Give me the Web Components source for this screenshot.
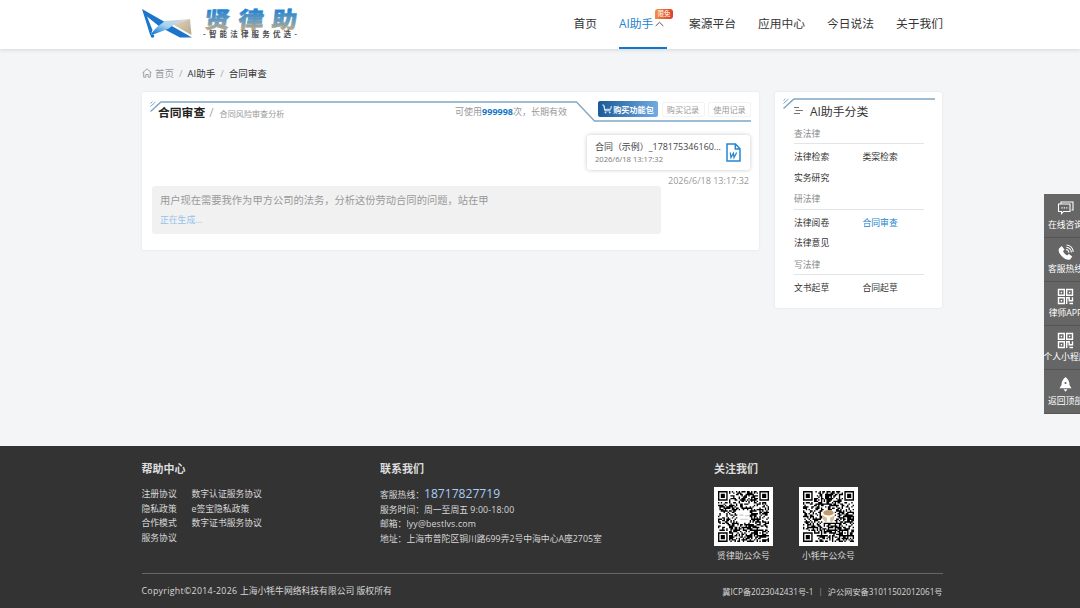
<!DOCTYPE html>
<html lang="zh-CN">
<head>
<meta charset="UTF-8">
<title>合同审查 - 贤律助</title>
<style>
body{
    margin:0;
    height:608px;
    overflow:hidden;
    background:#f4f5f7;
    color:#333;
    font-family:"Open Sans","Noto Sans CJK SC",sans-serif;
    font-size:8.8px;
}
</style>
</head>
<body>
<law-page>
    <law-header slot="header">
        <nav-item>首页</nav-item>
        <nav-item active badge="限免">AI助手</nav-item>
        <nav-item>案源平台</nav-item>
        <nav-item>应用中心</nav-item>
        <nav-item>今日说法</nav-item>
        <nav-item>关于我们</nav-item>
    </law-header>
    <bread-crumb slot="crumb"></bread-crumb>
    <review-panel slot="main">
        <file-card name="合同（示例）_178175346160..." time="2026/6/18 13:17:32"></file-card>
        <chat-reply status="正在生成...">用户现在需要我作为甲方公司的法务，分析这份劳动合同的问题，站在甲</chat-reply>
    </review-panel>
    <side-menu slot="aside">
        <menu-group label="查法律"><span>法律检索</span><span>类案检索</span><span>实务研究</span></menu-group>
        <menu-group label="研法律"><span>法律阅卷</span><span class="on">合同审查</span><span>法律意见</span></menu-group>
        <menu-group label="写法律"><span>文书起草</span><span>合同起草</span></menu-group>
    </side-menu>
    <law-footer slot="footer"></law-footer>
</law-page>
<float-bar></float-bar>

<script>
function define(name, html, setup){
    const template = document.createElement('template');
    template.innerHTML = html;
    window.customElements.define(name, class extends HTMLElement{
        constructor(){
            super();
            this.attachShadow({mode:'open'});
            this.shadowRoot.appendChild(template.content.cloneNode(true));
        }
        connectedCallback(){
            if(setup) setup(this, this.shadowRoot);
        }
    });
}

define('law-page', `
<style>
:host{display:flex;flex-direction:column;height:608px}
.body{flex:1;width:800px;margin:0 auto;position:relative;left:2px}
.cols{display:flex;justify-content:space-between;align-items:flex-start}
</style>
<slot name="header"></slot>
<div class="body">
    <slot name="crumb"></slot>
    <div class="cols"><slot name="main"></slot><slot name="aside"></slot></div>
</div>
<slot name="footer"></slot>
`);

define('law-logo', `
<style>
:host{display:block;width:160px;height:34px}
svg{display:block;overflow:visible}
.name{font:900 22.5px "Noto Sans CJK SC",sans-serif}
.sub{font:700 7.5px "Noto Sans CJK SC",sans-serif;fill:#4a4d52}
</style>
<svg width="160" height="34" viewBox="141 7 160 34">
    <defs>
        <linearGradient id="word" x1="0" y1="0" x2="0" y2="1">
            <stop offset=".2" stop-color="#1f80d4"/><stop offset=".58" stop-color="#6b9cb9"/><stop offset=".85" stop-color="#c0aa88"/>
        </linearGradient>
        <linearGradient id="band" x1="0" y1="1" x2="1" y2="0">
            <stop offset=".1" stop-color="#1b7fd6"/><stop offset=".5" stop-color="#a9d4f3"/><stop offset="1" stop-color="#ddd9cf"/>
        </linearGradient>
        <linearGradient id="tan" x1="0" y1="0" x2="1" y2="1">
            <stop offset="0" stop-color="#e3d8c6"/><stop offset="1" stop-color="#b9a789"/>
        </linearGradient>
    </defs>
    <path d="M142 9 192 37.500H180L160 27 147 16.500 152.500 30 150.500 36Z" fill="#1b75cb"/>
    <path d="M150 35 157 27 165 21 190 19 174 24.500 168 29 153 34.500Z" fill="url(#band)"/>
    <path d="M190 19 191.500 35 173 24.500Z" fill="url(#tan)"/>
    <circle cx="152.500" cy="36" r="1.800" fill="#1b75cb"/>
    <text class="name" x="0" y="0" textLength="82" transform="translate(203.800 28.300) skewX(-6) scale(1.130 1)" fill="url(#word)" stroke="url(#word)" stroke-width=".5">贤律助</text>
    <text class="sub" x="203" y="37.400" textLength="94">-智能法律服务优选-</text>
</svg>
`);

define('law-header', `
<style>
:host{
    display:block;
    flex:none;
    height:49px;
    background:#fff;
    box-shadow:0 1px 4px rgba(0,0,0,.13);
    position:relative;
}
.inner{width:802px;height:49px;margin:0 auto;display:flex;justify-content:space-between;position:relative;left:2px}
law-logo{margin-top:7px}
nav{display:flex;gap:22px}
</style>
<div class="inner"><law-logo></law-logo><nav><slot></slot></nav></div>
`);

define('nav-item', `
<style>
:host{display:block;height:49px;box-sizing:border-box;font-size:11.75px;line-height:47px;white-space:nowrap;position:relative}
:host([active]){color:#2483cf;border-bottom:2px solid #1277c9;width:48px}
svg,.badge{display:none}
:host([active]) svg{display:inline-block;margin-left:2px;vertical-align:1.500px}
:host([active]) .badge{
    display:block;
    position:absolute;
    left:36px;
    top:8.500px;
    width:18px;
    height:10px;
    border-radius:3px 3px 3px 0;
    background:linear-gradient(100deg,#ef9340,#dc3a28);
    color:#fff;
    font-size:6.500px;
    line-height:9.500px;
    text-align:center;
}
</style>
<slot></slot><svg width="9" height="6" viewBox="0 0 9 6" fill="none" stroke="#555"><path d="M.7 5 4.500 1.300 8.300 5"/></svg><span class="badge"></span>
`, (el, root) => {
    root.querySelector('.badge').textContent = el.getAttribute('badge') || '';
});

define('bread-crumb', `
<style>
:host{display:flex;align-items:center;height:17px;padding:15.500px 0 10.500px;font-size:9.500px;white-space:nowrap}
svg{margin-right:3px}
.home{color:#999}
i{font-style:normal;color:#aaa;margin:0 5px}
</style>
<svg width="10" height="10" viewBox="0 0 10 10" fill="none" stroke="#999" stroke-width=".9"><path d="M.6 4.800 5 .8l4.400 4M1.700 4v5.200h2.100V6.500h2.400v2.700h2.100V4"/></svg>
<span class="home">首页</span><i>/</i><span>AI助手</span><i>/</i><span>合同审查</span>
`);

define('review-panel', `
<style>
:host{display:block;box-sizing:border-box;width:617px;height:158px;background:#fff;border-radius:2px;box-shadow:0 0 3px rgba(0,0,0,.08);padding:8px 8px 0 8px;position:relative}
.frame{position:absolute;left:8px;top:8px}
.top{display:flex;height:32px;position:relative}
h1{margin:0 0 0 8px;font-size:11.800px;line-height:25px;font-weight:700;color:#222}
i{font-style:normal;font-size:12px;line-height:25px;color:#aaa;margin:0 6px 0 4px}
.desc{font-size:8.100px;line-height:27px;color:#999}
.quota{margin-left:auto;margin-right:31px;font-size:9px;line-height:24px;color:#999}
b{color:#1277c9}
.btns{display:flex;gap:3.500px;padding:1.500px 0 0}
.btns span{box-sizing:border-box;height:15px;line-height:13px;border:1px solid #f3f3f3;border-radius:2px;font-size:8.100px;color:#999;width:43px;text-align:center}
.btns .buy{display:flex;align-items:center;justify-content:center;gap:1px;width:60px;height:16px;margin-top:-.5px;border:0;background:linear-gradient(100deg,#175896,#74ade4);color:#fff;font-weight:600}
</style>
<svg class="frame" width="602" height="22" fill="none" stroke="#7fa6c6">
    <path d="M.5 11.500 11 2h415.500l18 19H601" stroke-width="1.300"/>
    <path d="M.5 6.500 5.500 2M.5 3.500 2.500 1.700M5 7.500 10 2.500" stroke-width="1"/>
</svg>
<div class="top">
    <h1>合同审查</h1><i>/</i><span class="desc">合同风险审查分析</span>
    <span class="quota">可使用<b>999998</b>次，长期有效</span>
    <div class="btns">
        <span class="buy"><svg width="10" height="10" viewBox="0 0 10 10" fill="none" stroke="#fff" stroke-width=".9"><path d="M.3 1h1.500l1 5.800h5.500M2.300 3.500V2.200M3 5.300h5.700L9.400 2"/><circle cx="3.500" cy="8.600" r=".5"/><circle cx="7.800" cy="8.600" r=".5"/></svg>购买功能包</span>
        <span>购买记录</span><span>使用记录</span>
    </div>
</div>
<slot></slot>
`);

define('file-card', `
<style>
:host{display:flex;flex-direction:column;align-items:flex-end;margin-right:1px}
.card{box-sizing:border-box;width:163px;height:35px;margin-top:2.500px;padding:4px 9px 0 8px;display:flex;justify-content:space-between;border-radius:3px;background:#fff;box-shadow:0 0 4px rgba(0,0,0,.22)}
.name{font-size:8.950px;line-height:15px;color:#444;white-space:nowrap}
.time{font-size:7.600px;line-height:11px;color:#777}
.sent{font-size:9.050px;line-height:13px;margin-top:4px;margin-right:1px;color:#999}
svg{margin-top:4px}
</style>
<div class="card">
    <div><div class="name"></div><div class="time"></div></div>
    <svg width="15" height="19" viewBox="0 0 15 19" fill="none" stroke="#2785d2" stroke-width="1.500"><path d="M1 1h8.500L14 5.800V18H1ZM9.300 1v5H14"/><path d="m4.300 9.500.7 5 2.400-4.300.6 4.300 2.700-5" stroke-width="1.300"/></svg>
</div>
<div class="sent"></div>
`, (el, root) => {
    root.querySelector('.name').textContent = el.getAttribute('name');
    root.querySelector('.time').textContent = el.getAttribute('time');
    root.querySelector('.sent').textContent = el.getAttribute('time');
});

define('chat-reply', `
<style>
:host{display:block;box-sizing:border-box;width:509px;height:48px;margin:-1px 0 0 2px;padding:6px 8px;background:#f1f1f1;border-radius:3px;font-size:10.270px;line-height:17px;color:#999;white-space:nowrap}
.status{font-size:8.800px;line-height:14px;margin-top:4px;color:#92c4ec}
</style>
<slot></slot>
<div class="status"></div>
`, (el, root) => {
    root.querySelector('.status').textContent = el.getAttribute('status');
});

define('side-menu', `
<style>
:host{display:block;box-sizing:border-box;width:167px;height:216px;padding:8px 18px 0 19px;background:#fff;border-radius:2px;box-shadow:0 0 3px rgba(0,0,0,.08);position:relative}
.frame{position:absolute;left:8px;top:5px}
h2{display:flex;align-items:center;gap:7px;margin:0;height:20.500px;font-size:11.900px;font-weight:400;color:#333}
</style>
<svg class="frame" width="153" height="13" fill="none" stroke="#7fa6c6">
    <path d="M.5 11.500 11 2H152" stroke-width="1.400"/>
    <path d="M.5 6.500 5.500 2M.5 3.500 2.500 1.700M5 7.500 10 2.500"/>
</svg>
<h2><svg width="9" height="9" fill="none" stroke="#777"><path d="M0 1.500h5M1.500 4.500H9M0 7.500h6"/></svg>AI助手分类</h2>
<slot></slot>
`);

define('menu-group', `
<style>
:host{display:block;padding-top:6px;margin-bottom:-2px}
.label{height:16.500px;line-height:15px;font-size:8.800px;color:#888;border-bottom:1px solid #e1e5e8}
.items{display:grid;grid-template-columns:68.500px 1fr;grid-auto-rows:20.600px;line-height:20px;padding-top:3px;color:#333}
::slotted(.on){color:#2483cf}
</style>
<div class="label"></div>
<div class="items"><slot></slot></div>
`, (el, root) => {
    root.querySelector('.label').textContent = el.getAttribute('label');
});

// decorative code: finder and alignment marks plus a seeded fill
function qrPath(seed){
    const n = 37;
    let d = '';
    const ring = (x, y, cx, cy) => Math.max(Math.abs(x - cx), Math.abs(y - cy));
    for(let y = 0; y < n; y++){
        for(let x = 0; x < n; x++){
            seed = (seed * 1103515245 + 12345) % 2147483648;
            let on = (seed >> 16) % 100 < 52;
            for(const [cx, cy] of [[3, 3], [33, 3], [3, 33]]){
                const r = ring(x, y, cx, cy);
                if(r <= 4) on = r < 2 || r === 3;
            }
            const a = ring(x, y, 30, 30);
            if(a <= 2) on = a !== 1;
            if(ring(x, y, 18, 18) < 5) on = false;
            if(on) d += 'M' + x + ' ' + y + 'h1v1h-1z';
        }
    }
    return d;
}

define('qr-code', `
<style>
:host{display:block;width:59px;text-align:center}
.box{display:block;width:59px;height:59px;background:#fff}
.text{line-height:14px;margin-top:3px;white-space:nowrap}
</style>
<svg class="box" viewBox="-2.900 -2.900 42.800 42.800">
    <path class="mods" fill="#000"/>
    <g class="mark"></g>
</svg>
<div class="text"><slot></slot></div>
`, (el, root) => {
    root.querySelector('.mods').setAttribute('d', qrPath(Number(el.getAttribute('seed'))));
    root.querySelector('.mark').innerHTML = el.hasAttribute('ox')
        ? '<ellipse cx="18.500" cy="15.800" rx="3.800" ry="2" fill="#c39b6b"/><path d="M14 17.500q0 4 3 5.500l.5-3.500zM23 17.500q0 4-3 5.500l-.5-3.500z" fill="#d9bd95"/>'
        : '<path d="M15.500 17.500h3M19.500 18h3M16 20.500h6" stroke="#ccc" stroke-width=".8"/>';
});

define('law-footer', `
<style>
:host{display:block;flex:none;box-sizing:border-box;height:162px;background:#333;color:#d8d8d8}
.wrap{width:801px;margin:0 auto;position:relative;left:2px}
.cols{display:grid;grid-template-columns:238.500px 334px 1fr;height:127.500px;box-sizing:border-box;padding-top:14px;border-bottom:1px solid #666}
h3{margin:0;font-size:11px;line-height:17px;font-weight:700;color:#ddd}
.links{display:grid;grid-template-columns:50px 1fr;grid-auto-rows:14.700px;line-height:14.700px;margin-top:10px}
.contact div{height:14.700px;line-height:14.700px;white-space:nowrap}
.contact{margin-top:11px}
.tel{font-size:12.100px;line-height:1;color:#a9cdf5}
.codes{display:flex;gap:26px;margin-top:9.500px}
.bottom{display:flex;justify-content:space-between;line-height:35px;white-space:nowrap}
.lat{letter-spacing:.3px}
.icp{font-size:8.200px;word-spacing:1px}
</style>
<div class="wrap">
    <div class="cols">
        <div>
            <h3>帮助中心</h3>
            <div class="links">
                <span>注册协议</span><span>数字认证服务协议</span>
                <span>隐私政策</span><span>e签宝隐私政策</span>
                <span>合作模式</span><span>数字证书服务协议</span>
                <span>服务协议</span>
            </div>
        </div>
        <div>
            <h3>联系我们</h3>
            <div class="contact">
                <div>客服热线：<span class="tel">18717827719</span></div>
                <div>服务时间：周一至周五 <span style="letter-spacing:.15px">9:00-18:00</span></div>
                <div>邮箱：<span style="letter-spacing:.15px">lyy@bestlvs.com</span></div>
                <div>地址：上海市普陀区铜川路699弄2号中海中心A座2705室</div>
            </div>
        </div>
        <div>
            <h3>关注我们</h3>
            <div class="codes"><qr-code seed="71">贤律助公众号</qr-code><qr-code seed="2026" ox>小牦牛公众号</qr-code></div>
        </div>
    </div>
    <div class="bottom"><span><span class="lat">Copyright©2014-2026 </span>上海小牦牛网络科技有限公司 版权所有</span><span class="icp">冀ICP备2023042431号-1 ｜ 沪公网安备31011502012061号</span></div>
</div>
`);

define('float-item', `
<style>
:host{display:flex;flex-direction:column;align-items:center;box-sizing:border-box;height:44px;padding-top:6px;border-bottom:1px solid #555;white-space:nowrap}
.label{line-height:14px;margin-top:1px}
</style>
<svg width="17" height="17" viewBox="0 0 17 17" fill="none" stroke="#fff" stroke-width="1.100"></svg>
<div class="label"><slot></slot></div>
`, (el, root) => {
    const icons = {
        chat:'<path d="M4 3.500V2h12v8h-1.500M1.500 4H13v7.500H6.500L4.500 13.700V11.500h-3z"/><path d="M4.500 7.800h1.200M6.800 7.800H8M9.200 7.800h1.200" stroke-width="1.300"/>',
        phone:'<path d="M2 4.500 4.700 2l2.800 3.500L6 7.300q1.500 3 4.200 4.200l1.600-1.400 3.500 2.500-2.200 2.800Q9.500 17 5 12.500T2 4.500z" fill="#fff" stroke="none"/><path d="M9 5.500q2.500.3 3 3.200M9.300 3.200q4.500.5 5.200 5.200M9.500 1q6 .5 6.800 7"/>',
        code:'<path d="M1.500 1.500h5.800v5.800H1.500zM9.700 1.500h5.800v5.800H9.700zM1.500 9.700h5.800v5.800H1.500zM9.700 16V9.700h2.500v3h3.300V9.200M12.500 15.500h3.500M4.400 3.700v1.500M12.600 3.700v1.500M4.400 11.900v1.500" stroke-width="1.400"/>',
        rocket:'<path d="M8.500 1Q12.500 4 12.500 9l2 3.200H2.500L4.500 9Q4.500 4 8.500 1zM6.500 13.200h4l-2 2.500z" fill="#fff" stroke="none"/><circle cx="8.500" cy="7" r="1.100" fill="#666" stroke="none"/>'
    };
    root.querySelector('svg').innerHTML = icons[el.getAttribute('icon')];
});

define('float-bar', `
<style>
:host{display:block;position:fixed;right:0;top:194px;width:36px;height:220px;overflow:hidden;background:#666;color:#fff}
.list{width:43px}
</style>
<div class="list">
    <float-item icon="chat">在线咨询</float-item>
    <float-item icon="phone">客服热线</float-item>
    <float-item icon="code">律师APP</float-item>
    <float-item icon="code">个人小程序</float-item>
    <float-item icon="rocket">返回顶部</float-item>
</div>
`);
</script>
</body>
</html>
